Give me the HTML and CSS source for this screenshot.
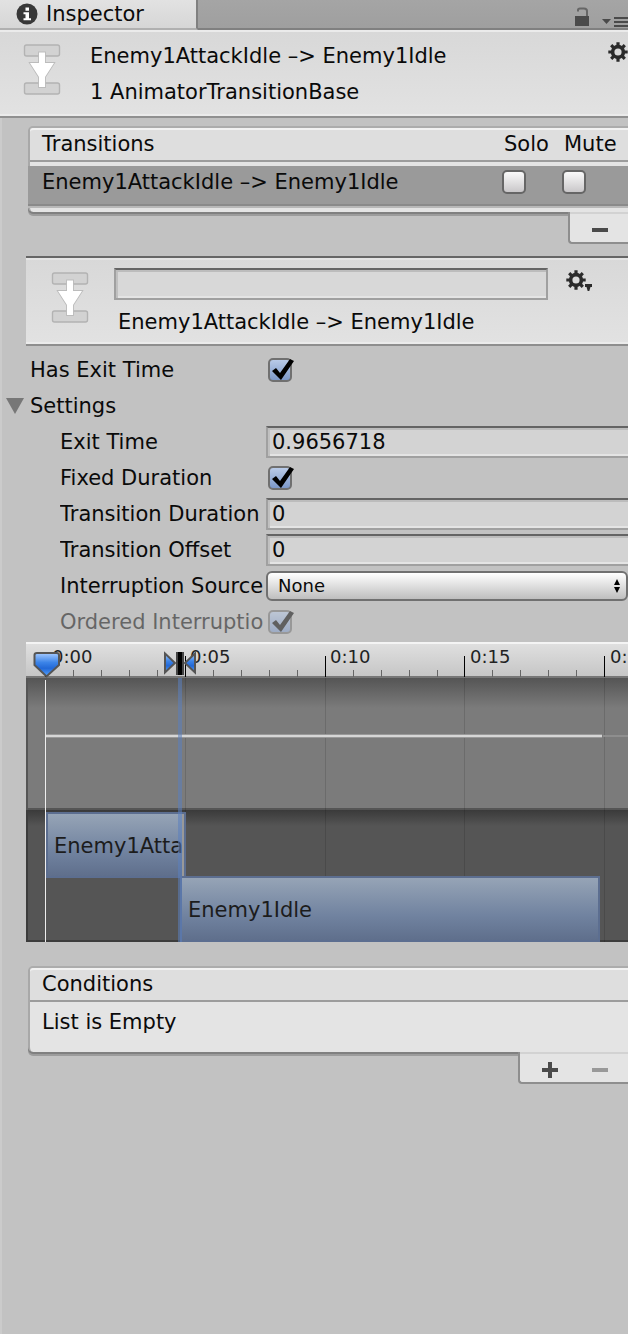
FILE: index.html
```html
<!DOCTYPE html>
<html lang="en">
<head>
<meta charset="utf-8">
<title>Inspector</title>
<link rel="stylesheet" href="styles.css">
</head>
<body>
<svg class="defs" aria-hidden="true">
  <symbol id="transition" viewBox="0 0 40 54">
    <g fill="#d2d2d2" stroke="#b3b3b3" stroke-width="1.4">
      <rect x="2.500" y="2" width="35" height="11" rx="2"/>
      <rect x="2.500" y="40" width="35" height="11" rx="2"/>
    </g>
    <path d="M17 9.500h6v10.500h9L23 34v10H17V34L8 20H17z" fill="#fff" stroke="#bcbcbc" stroke-width="1.800"/>
    <path d="M17 9.500h6v10.500h9L23 34v10H17V34L8 20H17z" fill="#fff"/>
  </symbol>
  <symbol id="gear" viewBox="0 0 20 20">
    <g stroke="#2b2b2b" stroke-width="3.600" fill="none">
      <circle cx="10" cy="10" r="5.400"/>
      <path d="M10 .3v4M10 15.700v4M.3 10h4M15.700 10h4M3.200 3.200l2.600 2.600M14.200 14.200l2.600 2.600M16.800 3.200l-2.600 2.600M5.800 14.200l-2.600 2.600" stroke-width="3.200"/>
    </g>
  </symbol>
</svg>

<div class="inspector">
  <header class="tabbar">
    <button class="tab" type="button">
      <svg class="info" viewBox="0 0 22 22" aria-hidden="true">
        <circle cx="11" cy="11" r="10.500" fill="#383838"/>
        <path d="M9.500 4.500h3.500v3.200H9.500zM7.500 9.200h5.500v6h2v2H7.500v-2h2v-4h-2z" fill="#fff"/>
      </svg>
      Inspector
    </button>
    <div class="tab-tools">
      <button class="plain" type="button" aria-label="Lock">
        <svg width="14" height="20" viewBox="0 0 14 20"><path d="M0 9h14v10H0z" fill="#4a4a4a"/><path d="M3 4.500V3q0-1.500 2-1.500h4Q12 1.500 12 4v5" fill="none" stroke="#666" stroke-width="2"/></svg>
      </button>
      <button class="plain" type="button" aria-label="Menu">
        <svg width="27" height="12" viewBox="0 0 27 12"><path d="M1 4h9L5.500 9z" fill="#4a4a4a"/><path d="M13 3h14M13 7h14M13 11h14" stroke="#4a4a4a" stroke-width="2"/></svg>
      </button>
    </div>
  </header>

  <section class="banner">
    <svg class="state-icon" aria-hidden="true"><use href="#transition"/></svg>
    <div class="banner-text">
      <div>Enemy1AttackIdle –&gt; Enemy1Idle</div>
      <div>1 AnimatorTransitionBase</div>
    </div>
    <button class="plain banner-gear" type="button" aria-label="Options"><svg width="20" height="20"><use href="#gear"/></svg></button>
  </section>

  <section class="list">
    <div class="list-head columns"><span>Transitions</span><span class="col-name">Solo</span><span class="col-name">Mute</span></div>
    <div class="list-row columns">
      <span>Enemy1AttackIdle –&gt; Enemy1Idle</span>
      <input class="check" type="checkbox" aria-label="Solo">
      <input class="check" type="checkbox" aria-label="Mute">
    </div>
    <div class="list-base"></div>
    <div class="list-tools">
      <button class="plain tool" type="button" aria-label="Remove transition"><svg width="16" height="16"><path d="M0 6h16v4H0z" fill="#4a4a4a"/></svg></button>
    </div>
  </section>

  <section class="detail">
    <svg class="state-icon" aria-hidden="true"><use href="#transition"/></svg>
    <div class="detail-body">
      <div class="detail-line">
        <input class="field name" type="text" aria-label="Transition name">
        <button class="plain" type="button" aria-label="Transition options">
          <svg width="27" height="28" viewBox="0 0 27 28"><svg width="20" height="20"><use href="#gear"/></svg><path d="M19 14h7v3h-1.500L23.300 21h-1.600L20.500 17H19z" fill="#2b2b2b"/></svg>
        </button>
      </div>
      <div class="detail-name">Enemy1AttackIdle –&gt; Enemy1Idle</div>
    </div>
  </section>

  <form class="props">
    <div class="prop"><label for="exit">Has Exit Time</label><input class="check" id="exit" type="checkbox" checked></div>
    <button class="plain foldout" type="button" aria-expanded="true"><svg width="18" height="16"><path d="M0 0h18L9 16z" fill="#777"/></svg>Settings</button>
    <div class="prop nested"><label for="time">Exit Time</label><input class="field" id="time" type="text" value="0.9656718"></div>
    <div class="prop nested"><label for="fixed">Fixed Duration</label><input class="check" id="fixed" type="checkbox" checked></div>
    <div class="prop nested"><label for="dur">Transition Duration</label><input class="field" id="dur" type="text" value="0"></div>
    <div class="prop nested"><label for="off">Transition Offset</label><input class="field" id="off" type="text" value="0"></div>
    <div class="prop nested"><label for="src">Interruption Source</label>
      <div class="popup"><select id="src"><option>None</option></select>
        <svg class="arrows" width="6" height="14" aria-hidden="true"><path d="M3 0l3 6H0zM0 8h6l-3 6z"/></svg></div></div>
    <div class="prop nested off"><label for="ord">Ordered Interruption</label><input class="check" id="ord" type="checkbox" checked disabled></div>
  </form>

  <section class="timeline" aria-label="Transition timeline">
    <div class="ruler"></div>
    <div class="curve"></div>
    <div class="tracks"></div>
    <svg class="ticks" width="100%" height="300" aria-hidden="true">
      <path d="M159.500 36v264M299.500 36v264M438.500 36v264M578.500 36v264" stroke="#000" stroke-opacity=".13"/>
      <path d="M47.500 28v7M75.500 28v7M103.500 28v7M131.500 28v7M187.500 28v7M215.500 28v7M243.500 28v7M271.500 28v7M327.500 28v7M355.500 28v7M383.500 28v7M411.500 28v7M466.500 28v7M494.500 28v7M522.500 28v7M550.500 28v7" stroke="#666"/>
      <path d="M19.500 14v21M159.500 14v21M299.500 14v21M438.500 14v21M578.500 14v21" stroke="#000"/>
      <path d="M20 94h556" stroke="#999" stroke-width="4"/>
      <path d="M20 94h556" stroke="#d6d6d6" stroke-width="2"/>
      <path d="M577 94h60" stroke="#8e8e8e" stroke-width="2"/>
    </svg>
    <span class="stamp s0">0:00</span><span class="stamp s5">0:05</span><span class="stamp s10">0:10</span><span class="stamp s15">0:15</span><span class="stamp s20">0:20</span>
    <div class="clip from">Enemy1AttackIdle</div>
    <div class="clip to">Enemy1Idle</div>
    <svg class="ticks" width="100%" height="300" aria-hidden="true">
      <defs><linearGradient id="blue" x2="0" y2="1"><stop stop-color="#a6cbff"/><stop offset=".4" stop-color="#3c84e8"/><stop offset=".65" stop-color="#2268d6"/><stop offset="1" stop-color="#58a6ff"/></linearGradient></defs>
      <path d="M152 36h4v264h-4z" fill="#5b7fbd" fill-opacity=".55"/>
      <path d="M156 172h2v62h-2z" fill="#999"/>
      <path d="M19.500 38v262" stroke="#eee"/>
      <path d="M8.500 13Q8.500 11 11 11h19.500Q33 11 33 13v10L20.500 34.500 8.500 23z" fill="url(#blue)" stroke="#555" stroke-width="2"/>
      <path d="M139 11.500L149 21 139 30.500zM169 11.500L159 21l10 9.500z" fill="url(#blue)" stroke="#555" stroke-width="2"/>
      <path d="M150 10h8v23h-8z" fill="#444"/><path d="M152 10h4v23h-4z"/>
    </svg>
  </section>

  <section class="list">
    <div class="list-head">Conditions</div>
    <div class="list-empty">List is Empty</div>
    <div class="list-tools wide">
      <button class="plain tool" type="button" aria-label="Add condition"><svg width="16" height="16"><path d="M0 6h6V0h4v6h6v4h-6v6H6v-6H0z" fill="#4a4a4a"/></svg></button>
      <button class="plain tool" type="button" aria-label="Remove condition" disabled><svg width="16" height="16"><path d="M0 6h16v4H0z" fill="#999"/></svg></button>
    </div>
  </section>
</div>
</body>
</html>
```
FILE: styles.css
```css
* { box-sizing: border-box; }
body {
  margin: 0;
  background: #c2c2c2;
  color: #0a0a0a;
  font: 21px/36px "DejaVu Sans", sans-serif;
  overflow-x: hidden;
}
input, select, button { font: inherit; color: inherit; margin: 0; }
svg { display: block; flex: none; }
.defs { position: absolute; width: 0; height: 0; }
.plain { border: 0; padding: 0; background: none; }
.inspector {
  min-height: 100vh;
  border-left: 2px solid #cbcbcb;
  white-space: nowrap;
}

/* Tab bar */
.tabbar {
  display: flex;
  justify-content: space-between;
  height: 30px;
  margin-left: -2px;
  background: linear-gradient(#a5a5a5, #9f9f9f);
  border-bottom: 2px solid #808080;
}
.tab {
  display: flex;
  align-items: center;
  gap: 8px;
  width: 198px;
  height: 30px;
  padding: 0 0 0 16px;
  border: 0;
  border-right: 2px solid #808080;
  border-bottom: 2px solid #b0b0b0;
  background: linear-gradient(#e2e2e2, #d6d6d6);
  line-height: 28px;
}
.info { width: 22px; height: 22px; }
.tab-tools { display: flex; align-items: flex-end; gap: 12px; padding-bottom: 1px; }

/* Object banner */
.banner {
  display: flex;
  height: 88px;
  margin-left: -2px;
  padding: 6px 0 0 22px;
  border-top: 2px solid #ebebeb;
  border-bottom: 2px solid #909090;
  background: linear-gradient(#d8d8d8, #e2e2e2);
  box-shadow: inset 0 -2px #ebebeb;
}
.state-icon { width: 40px; height: 54px; margin-top: 5px; }
.banner-text { flex: 1; padding-left: 28px; }
.banner-gear { align-self: flex-start; margin: 4px 0 0; }

/* Reorderable lists */
.list {
  margin: 8px 0 0 26px;
  border-left: 2px solid #a8a8a8;
  border-top: 2px solid #acacac;
  border-radius: 5px 0 0 5px;
  background: #e4e4e4;
  box-shadow: 0 2px #808080, 0 4px #9c9c9c;
  position: relative;
}
.list-head {
  height: 34px;
  padding-left: 12px;
  border-top: 2px solid #f2f2f2;
  border-bottom: 2px solid #9c9c9c;
  border-top-left-radius: 4px;
  background: #dedede;
  line-height: 28px;
}
.columns {
  display: grid;
  grid-template-columns: 1fr 60px 60px;
  padding-right: 6px;
}
.col-name { padding-left: 2px; }
.list-row {
  height: 42px;
  margin: 4px 0 0 -2px;
  padding: 0 6px 8px 14px;
  border-bottom: 2px solid #b8b8b8;
  background: #9a9a9a;
  box-shadow: inset 0 -2px #8a8a8a;
  align-items: center;
  line-height: 32px;
}
.list-base { height: 4px; }
.list-empty { height: 50px; padding-left: 12px; line-height: 40px; }
.list-tools {
  position: absolute;
  top: 100%;
  right: 0;
  display: flex;
  width: 60px;
  height: 32px;
  padding-left: 2px;
  border: solid #8e8e8e;
  border-width: 0 0 2px 2px;
  border-bottom-left-radius: 4px;
  background: #e4e4e4;
  box-shadow: inset 0 2px #d2d2d2;
}
.wide { width: 110px; padding: 0 3px 0 5px; }
.tool { flex: 1; display: grid; place-items: center; padding-top: 6px; }

/* Transition details */
.detail {
  display: flex;
  height: 90px;
  margin: 44px 0 0 24px;
  padding: 10px 35px 0 24px;
  border-top: 2px solid #666;
  border-bottom: 2px solid #8e8e8e;
  background: linear-gradient(#d8d8d8, #e2e2e2);
  box-shadow: inset 0 2px #e4e4e4, inset 0 -2px #ebebeb;
}
.detail .state-icon { margin-top: 3px; }
.detail-body { flex: 1; padding-left: 24px; }
.detail-line { display: flex; align-items: center; gap: 18px; }
.detail-name { padding: 4px 0 0 4px; }

.field {
  flex: 1;
  min-width: 0;
  height: 32px;
  padding: 0 0 0 4px;
  border: solid #a0a0a0;
  border-top-color: #646464;
  border-width: 2px 0 2px 2px;
  border-radius: 0;
  background: #d3d3d3;
  box-shadow: inset 0 2px #bcbcbc, inset 2px 0 #c0c0c0, inset 0 -2px #e4e4e4;
}
.name { border-right-width: 2px; background: #d8d8d8; }

.check {
  appearance: none;
  position: relative;
  width: 24px;
  height: 24px;
  border: 2px solid #666;
  border-radius: 5px;
  background: linear-gradient(#fafafa, #c9c7c9);
}
.check:checked { border-color: #707070; background: linear-gradient(#b9cbe8, #7c98c8); }
.check:checked::before {
  content: "";
  position: absolute;
  inset: -2px -5px -2px -2px;
  background: #000;
  clip-path: polygon(4px 13px, 8px 10px, 12px 15px, 22px 1px, 26px 3px, 13px 22px);
}

/* Properties */
.props { padding-top: 6px; }
.prop { display: flex; align-items: center; height: 36px; padding-left: 28px; }
.prop label { width: 234px; margin-right: 2px; overflow: hidden; }
.prop .check { margin-left: 2px; }
.nested { padding-left: 58px; }
.nested label { width: 204px; }
.off { opacity: .5; }
.foldout { display: flex; align-items: center; gap: 6px; padding-left: 4px; }
.popup { position: relative; flex: 1; }
.popup select {
  display: block;
  appearance: none;
  width: 100%;
  height: 30px;
  padding: 0 10px;
  border: 2px solid #707070;
  border-radius: 6px;
  background: linear-gradient(#fff, #bebebe);
  font-size: 18px;
  line-height: 24px;
}
.arrows { position: absolute; right: 8px; top: 8px; }

/* Timeline */
.timeline { position: relative; margin: 2px 0 0 24px; overflow: hidden; line-height: 24px; }
.ruler {
  height: 36px;
  border-top: 2px solid #f4f4f4;
  border-bottom: 2px solid #777;
  background: linear-gradient(#dfdfdf, #c6c6c6);
}
.curve {
  height: 132px;
  border-left: 2px solid #555;
  border-bottom: 2px solid #555;
  background: linear-gradient(#555, #7b7b7b 30px);
}
.tracks {
  height: 132px;
  border-left: 2px solid #3c3c3c;
  border-bottom: 2px solid #3c3c3c;
  background: linear-gradient(#3a3a3a, #555 16px);
}
.ticks { position: absolute; left: 0; top: 0; }
.stamp { position: absolute; top: 3px; font-size: 18px; color: #222; }
.s0 { left: 26px; }
.s5 { left: 164px; }
.s10 { left: 304px; }
.s15 { left: 444px; }
.s20 { left: 584px; }
.clip {
  position: absolute;
  height: 66px;
  padding-left: 6px;
  overflow: hidden;
  border: 2px solid #5c6e90;
  background: linear-gradient(#96a4b6, #7183a0 60%, #5f6f8c);
  color: #1c1c1c;
  line-height: 64px;
}
.from { left: 20px; top: 170px; width: 140px; }
.to { left: 154px; top: 234px; width: 420px; }
.timeline + .list { margin-top: 24px; }
```
